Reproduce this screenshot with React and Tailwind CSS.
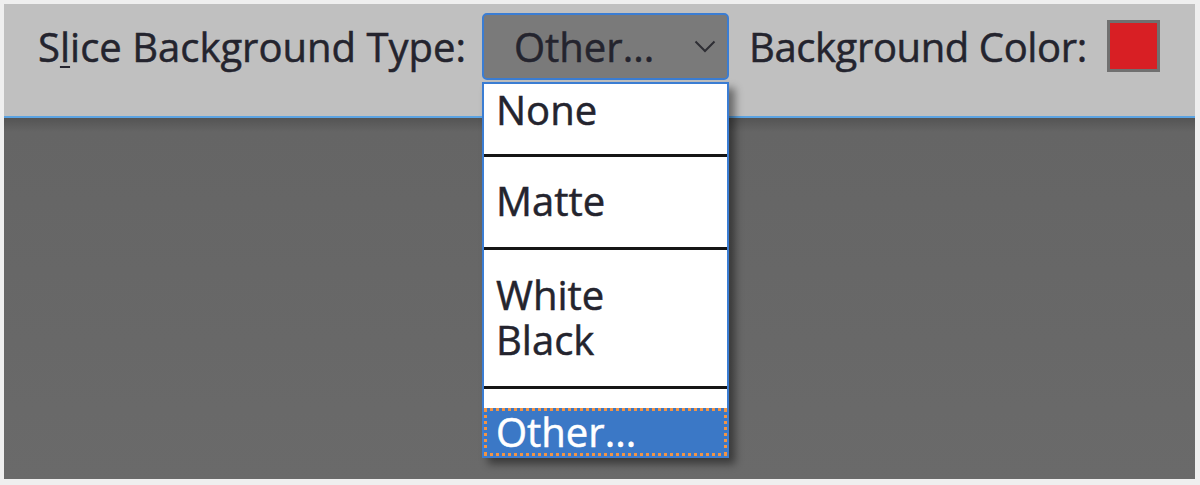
import React from "react";

const font = { fontFamily: '"Open Sans", "Noto Sans", sans-serif' };

export default function App() {
  return (
    <div
      className="w-[1200px] h-[485px] bg-[#efefef] pt-[4px] pl-[4px] pr-[5px] pb-[6px] flex flex-col overflow-hidden"
      style={font}
    >
      {/* Top options bar */}
      <div className="h-[114px] shrink-0 bg-[#c0c0c0] border-b-2 border-[#5ba3e2] flex items-start pt-[9px] pl-[34px] text-[40px] text-[#24242e] [-webkit-text-stroke:0.5px]">
        <div className="mt-[10px] leading-[48px] whitespace-nowrap">
          S<span className="underline decoration-2 underline-offset-[4px]">l</span>ice Background Type:
        </div>

        <div className="relative ml-[16px] w-[247px] h-[67px] shrink-0">
          <div className="w-full h-full rounded-[5px] border-2 border-[#3b7dd3] bg-[#7a7a7a] flex items-center pl-[30px] pr-[10px]">
            <span className="leading-[48px] flex-1">Other...</span>
            <svg width="22" height="13" viewBox="0 0 22 13" className="mr-[1px]">
              <polyline
                points="1.5,1.5 11,11 20.5,1.5"
                fill="none"
                stroke="#2e2e34"
                strokeWidth="2"
              />
            </svg>
          </div>

          {/* Open dropdown list */}
          <div className="absolute top-[69px] left-0 w-[247px] bg-white border-2 border-[#3b7dd3] shadow-[6px_6px_8px_rgba(0,0,0,0.45)] flex flex-col">
            <div className="h-[70px] pt-[2px] pl-[12px] leading-[48px]">None</div>
            <div className="h-[3px] bg-[#151515]" />
            <div className="h-[90px] pt-[20px] pl-[12px] leading-[48px]">Matte</div>
            <div className="h-[3px] bg-[#151515]" />
            <div className="h-[136px] pt-[22px] pl-[12px] flex flex-col">
              <div className="h-[45px] leading-[45px]">White</div>
              <div className="h-[45px] leading-[45px]">Black</div>
            </div>
            <div className="h-[3px] bg-[#151515]" />
            <div className="h-[19px]" />
            <div className="h-[48px] bg-[#3b78c6] border-[3px] border-dotted border-[#f29445] pl-[9px] leading-[42px] text-white">
              Other...
            </div>
          </div>
        </div>

        <div className="ml-[20px] mt-[10px] leading-[48px] whitespace-nowrap tracking-[-0.4px]">Background Color:</div>

        <div className="ml-[20px] mt-[7px] w-[53px] h-[52px] shrink-0 border-[3px] border-[#707070] bg-[#d81f24]" />
      </div>

      {/* Canvas area */}
      <div className="flex-1 bg-[linear-gradient(to_bottom,#545454_0px,#656565_14px,#6a6a6a_100%)]" />
    </div>
  );
}
